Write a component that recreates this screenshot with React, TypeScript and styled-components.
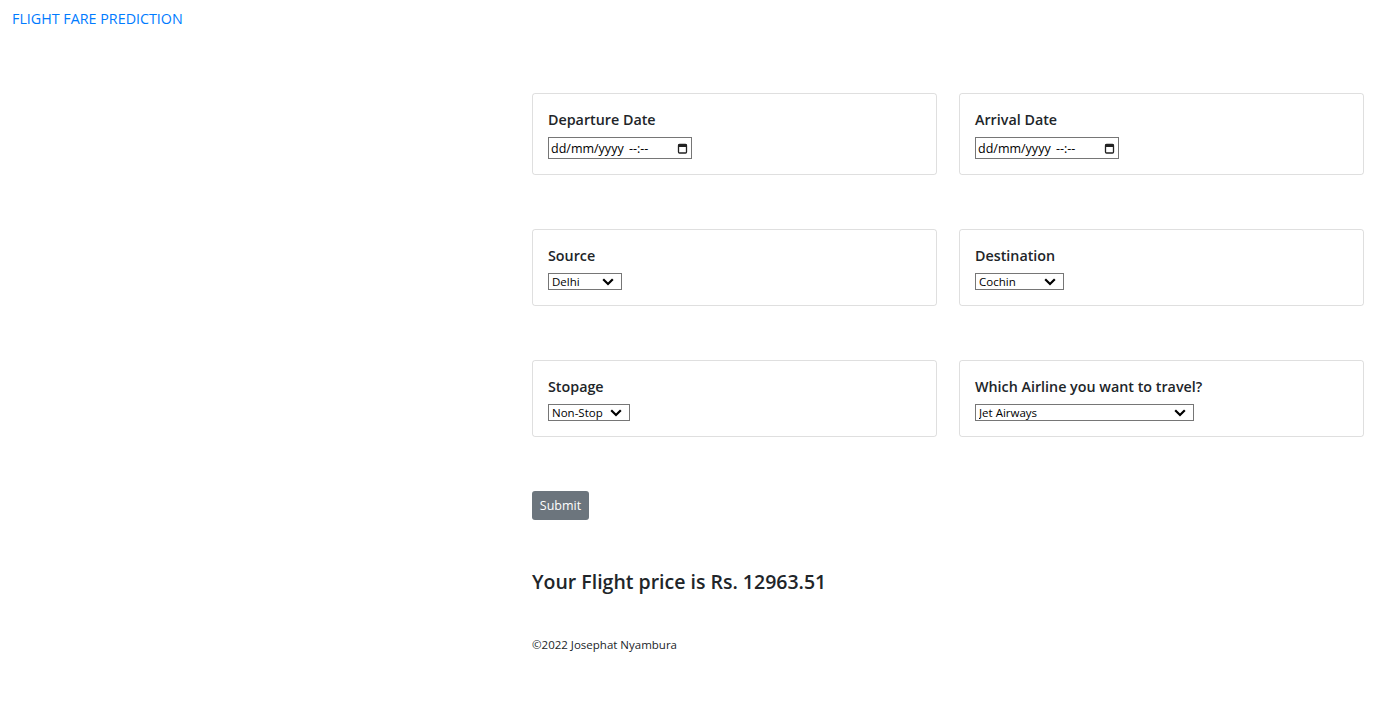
import React from "react";
import styled, { createGlobalStyle } from "styled-components";

const GlobalStyle = createGlobalStyle`
  html, body { margin: 0; padding: 0; background: #fff; }
  body {
    font-family: "Open Sans", "Noto Sans", "Liberation Sans", sans-serif;
    color: #212529;
  }
  * { box-sizing: border-box; }
`;

const Nav = styled.nav`
  display: flex;
  align-items: center;
  height: 36px;
  padding: 0 12px;
`;

const Brand = styled.a`
  color: #007bff;
  font-size: 14.3px;
  text-decoration: none;
`;

const Main = styled.main`
  margin-left: 532px;
  width: 832px;
  padding-top: 57px;
`;

const Grid = styled.div`
  display: grid;
  grid-template-columns: 405px 405px;
  column-gap: 22px;
  row-gap: 54px;
`;

const Card = styled.div`
  border: 1px solid rgba(0, 0, 0, 0.125);
  border-radius: 3px;
  padding: 16px 15px 15px;
  display: flex;
  flex-direction: column;
  align-items: flex-start;
`;

const Label = styled.h6`
  margin: 0 0 8px;
  font-size: 14.3px;
  font-weight: 600;
  line-height: 19px;
  color: #212529;
`;

const DateBox = styled.div`
  width: 144px;
  height: 22px;
  border: 1px solid #767676;
  display: flex;
  align-items: center;
  justify-content: space-between;
  padding: 0 3px 0 2px;
  font-size: 12.5px;
  color: #000;
`;

const DateText = styled.span`
  word-spacing: 2px;
`;

const SelectWrap = styled.div<{ $w: number }>`
  position: relative;
  width: ${(p) => p.$w}px;
  height: 17px;
`;

const Select = styled.select`
  display: block;
  appearance: none;
  -webkit-appearance: none;
  margin: 0;
  width: 100%;
  height: 100%;
  border: 1px solid #767676;
  border-radius: 0;
  background: #fff;
  padding: 0 0 0 3px;
  font-family: inherit;
  font-size: 11.5px;
  line-height: 15px;
  color: #000;
  outline: none;
`;

const Chevron = styled.svg`
  position: absolute;
  right: 8px;
  top: 5px;
  pointer-events: none;
`;

const SubmitButton = styled.button`
  display: block;
  margin-top: 54px;
  width: 57px;
  height: 29px;
  border: none;
  border-radius: 3px;
  background: #6c757d;
  color: #fff;
  font-family: inherit;
  font-size: 12.5px;
  padding: 0;
  cursor: pointer;
`;

const Result = styled.h4`
  margin: 47px 0 0;
  font-size: 19.5px;
  font-weight: 600;
  line-height: 29px;
  color: #212529;
`;

const Footer = styled.footer`
  margin-top: 39px;
  font-size: 11.5px;
  line-height: 19px;
  color: #212529;
`;

const CalendarIcon = () => (
  <svg width="11" height="11" viewBox="0 0 11 11" fill="none">
    <rect x="1.5" y="1.5" width="8" height="8.5" rx="1" stroke="#222" strokeWidth="1.3" />
    <rect x="1" y="1.5" width="9" height="2.5" fill="#222" />
  </svg>
);

const ChevronIcon = () => (
  <Chevron width="12" height="8" viewBox="0 0 12 8">
    <path d="M1.2 1.2 L6 6 L10.8 1.2" stroke="#000" strokeWidth="2.2" fill="none" />
  </Chevron>
);

type SelField = { label: string; value: string; options: string[]; width: number };

const DropField = ({ label, value, options, width }: SelField) => (
  <Card>
    <Label>{label}</Label>
    <SelectWrap $w={width}>
      <Select defaultValue={value}>
        {options.map((o) => (
          <option key={o}>{o}</option>
        ))}
      </Select>
      <ChevronIcon />
    </SelectWrap>
  </Card>
);

const DateField = ({ label }: { label: string }) => (
  <Card>
    <Label>{label}</Label>
    <DateBox>
      <DateText>dd/mm/yyyy --:--</DateText>
      <CalendarIcon />
    </DateBox>
  </Card>
);

export default function App() {
  return (
    <>
      <GlobalStyle />
      <Nav>
        <Brand href="#">FLIGHT FARE PREDICTION</Brand>
      </Nav>
      <Main>
        <Grid>
          <DateField label="Departure Date" />
          <DateField label="Arrival Date" />
          <DropField
            label="Source"
            value="Delhi"
            options={["Delhi", "Kolkata", "Mumbai", "Chennai"]}
            width={74}
          />
          <DropField
            label="Destination"
            value="Cochin"
            options={["Cochin", "Delhi", "Hyderabad", "Kolkata"]}
            width={89}
          />
          <DropField
            label="Stopage"
            value="Non-Stop"
            options={["Non-Stop", "1", "2", "3", "4"]}
            width={82}
          />
          <DropField
            label="Which Airline you want to travel?"
            value="Jet Airways"
            options={["Jet Airways", "IndiGo", "Air India", "Multiple carriers", "SpiceJet", "Vistara", "GoAir"]}
            width={219}
          />
        </Grid>
        <SubmitButton type="submit">Submit</SubmitButton>
        <Result>Your Flight price is Rs. 12963.51</Result>
        <Footer>©2022 Josephat Nyambura</Footer>
      </Main>
    </>
  );
}
